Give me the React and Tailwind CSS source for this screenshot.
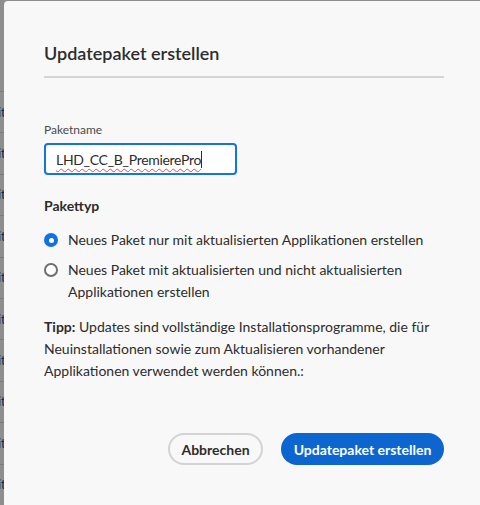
const rows = Array.from({ length: 11 });

const Radio = ({ checked }) =>
  checked ? (
    <span className="mt-[4px] flex h-[14px] w-[14px] shrink-0 items-center justify-center rounded-full bg-[#1170e6]">
      <span className="h-[5px] w-[5px] rounded-full bg-white" />
    </span>
  ) : (
    <span className="mt-[4px] h-[14px] w-[14px] shrink-0 rounded-full border-2 border-[#6e6e6e] bg-white" />
  );

export default function App() {
  return (
    <div
      className="flex h-[505px] w-[480px] overflow-hidden bg-[#8e8e8e] text-[#2c2c2c]"
      style={{ fontFamily: 'Lato, "Open Sans", sans-serif' }}
    >
      {/* background page peeking out on the left */}
      <div className="w-[4px] shrink-0 overflow-hidden pt-[91px]">
        {rows.map((_, i) => (
          <div
            key={i}
            className="flex h-[41.4px] items-center border-t border-[#7b7b7b] text-[13px] leading-none text-[#1b1f4a]"
          >
            <span className="-ml-[2px]">it</span>
          </div>
        ))}
      </div>

      <div className="mt-[1px] flex-1 rounded-tl-[4px] bg-[#f8f8f8] pl-[40px] pr-[36px] pt-[40px]">
        <h1 className="text-[18px] font-semibold leading-[24px] text-[#2c2c2c]">Updatepaket erstellen</h1>
        <div className="mt-[11px] h-[2px] bg-[#d5d5d5]" />

        <div className="mt-[44px] text-[12px] leading-[16px] text-[#4b4b4b]">Paketname</div>
        <div className="mt-[5px] flex h-[32px] w-[193px] items-center rounded-[4px] border-2 border-[#1473e6] bg-white px-[10px] text-[14px] tracking-[-0.3px]">
          <span className="underline decoration-[#e34850] decoration-wavy decoration-1 underline-offset-[3px]">
            LHD_CC_B_PremierePro
          </span>
          <span className="h-[17px] w-[1px] bg-[#2c2c2c]" />
        </div>

        <div className="mt-[21px] text-[14px] font-bold leading-[20px]">Pakettyp</div>

        <div className="mt-[13px] flex gap-[10px] text-[14px] leading-[22px]">
          <Radio checked />
          <span>Neues Paket nur mit aktualisierten Applikationen erstellen</span>
        </div>
        <div className="mt-[8px] flex gap-[10px] text-[14px] leading-[22px]">
          <Radio />
          <span className="w-[345px]">Neues Paket mit aktualisierten und nicht aktualisierten Applikationen erstellen</span>
        </div>

        <p className="mt-[13px] w-[390px] text-[14px] leading-[22px]">
          <span className="font-bold">Tipp:</span> Updates sind vollständige Installationsprogramme, die für
          Neuinstallationen sowie zum Aktualisieren vorhandener Applikationen verwendet werden können.:
        </p>

        <div className="mt-[51px] flex justify-end gap-[18px]">
          <button className="h-[32px] w-[95px] rounded-full border-2 border-[#d3d3d3] text-[14px] font-bold text-[#2c2c2c]">
            Abbrechen
          </button>
          <button className="h-[32px] w-[163px] rounded-full bg-[#0d66d0] text-[14px] font-bold text-white">
            Updatepaket erstellen
          </button>
        </div>
      </div>
    </div>
  );
}
